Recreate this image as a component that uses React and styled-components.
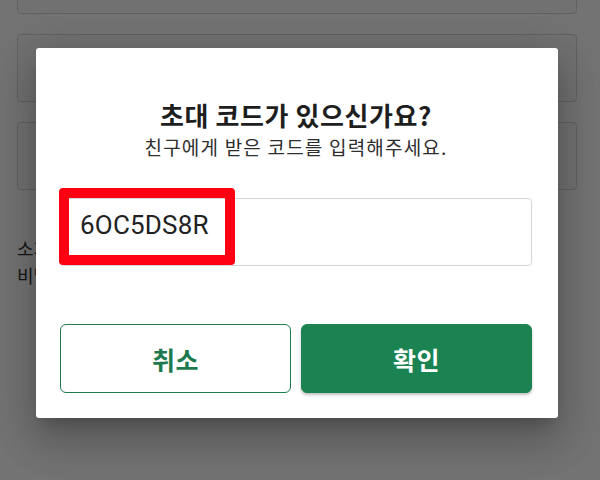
import React from "react";
import styled, { createGlobalStyle } from "styled-components";

const GlobalStyle = createGlobalStyle`
  html, body {
    margin: 0;
    padding: 0;
    background: #ffffff;
    overflow: hidden;
  }
  body {
    font-family: "Noto Sans CJK KR", "Noto Sans", sans-serif;
  }
`;

const Screen = styled.div`
  position: relative;
  width: 600px;
  height: 480px;
  overflow: hidden;
  background: #ffffff;
`;

const CardList = styled.div`
  display: flex;
  flex-direction: column;
  gap: 20px;
  margin-top: -54px;
  padding: 0 23px 0 17px;
`;

const Card = styled.div`
  height: 66px;
  border: 1px solid #d8d8d8;
  border-radius: 4px;
  background: #fbfbfb;
`;

const InfoText = styled.p`
  margin: 0;
  padding: 0 17px;
  font-size: 18px;
  line-height: 27px;
  color: #333333;
`;

const InfoBlock = styled.div`
  padding-top: 45px;
`;

const Overlay = styled.div`
  position: absolute;
  inset: 0;
  background: rgba(0, 0, 0, 0.55);
  display: flex;
  align-items: flex-start;
  padding: 48px 42px 0 36px;
`;

const Dialog = styled.div`
  flex: 1;
  background: #ffffff;
  border-radius: 3px;
  padding: 48px 26px 25px 24px;
  box-shadow: 0 11px 15px -7px rgba(0, 0, 0, 0.2),
    0 24px 38px 3px rgba(0, 0, 0, 0.14), 0 9px 46px 8px rgba(0, 0, 0, 0.12);
  display: flex;
  flex-direction: column;
`;

const Title = styled.h2`
  margin: 0;
  text-align: center;
  font-size: 26px;
  line-height: 37px;
  letter-spacing: 0.6px;
  font-weight: 700;
  color: #1e1e1e;
`;

const Subtitle = styled.p`
  margin: 1px 0 0;
  text-align: center;
  font-size: 19px;
  line-height: 26px;
  letter-spacing: 1.2px;
  color: #2e2e2e;
`;

const FieldWrap = styled.div`
  position: relative;
  margin-top: 38px;
`;

const CodeField = styled.div`
  height: 68px;
  box-sizing: border-box;
  border: 1px solid #d4d7d9;
  border-radius: 4px;
  padding: 13px 19px 0;
  font-family: Roboto, "Noto Sans", sans-serif;
  font-size: 26px;
  line-height: 26px;
  letter-spacing: 0.2px;
  color: #222222;
`;

const Highlight = styled.div`
  position: absolute;
  top: -10px;
  left: -1px;
  width: 176px;
  height: 77px;
  box-sizing: border-box;
  border: 10px solid #ff0012;
  border-radius: 4px;
  pointer-events: none;
`;

const Actions = styled.div`
  display: grid;
  grid-template-columns: 1fr 1fr;
  gap: 10px;
  margin-top: 58px;
`;

const Button = styled.button`
  height: 69px;
  border-radius: 6px;
  font-family: "Noto Sans CJK KR", sans-serif;
  font-size: 25px;
  letter-spacing: 0.5px;
  font-weight: 700;
  cursor: pointer;
  border: 1.5px solid;
  background: ${(p) => (p.primary ? "#1b8352" : "#ffffff")};
  color: ${(p) => (p.primary ? "#ffffff" : "#1d7a4f")};
  box-shadow: ${(p) =>
    p.primary ? "0 2px 3px rgba(0, 0, 0, 0.25)" : "none"};
  border-color: ${(p) => (p.primary ? "#1b8352" : "#1d7b50")};
`;

export default function App() {
  return (
    <>
      <GlobalStyle />
      <Screen>
        <CardList>
          <Card />
          <Card />
          <Card />
        </CardList>
        <InfoBlock>
          <InfoText>소개</InfoText>
          <InfoText>비밀번호</InfoText>
        </InfoBlock>
        <Overlay>
          <Dialog>
            <Title>초대 코드가 있으신가요?</Title>
            <Subtitle>친구에게 받은 코드를 입력해주세요.</Subtitle>
            <FieldWrap>
              <CodeField>6OC5DS8R</CodeField>
              <Highlight />
            </FieldWrap>
            <Actions>
              <Button>취소</Button>
              <Button primary>확인</Button>
            </Actions>
          </Dialog>
        </Overlay>
      </Screen>
    </>
  );
}
